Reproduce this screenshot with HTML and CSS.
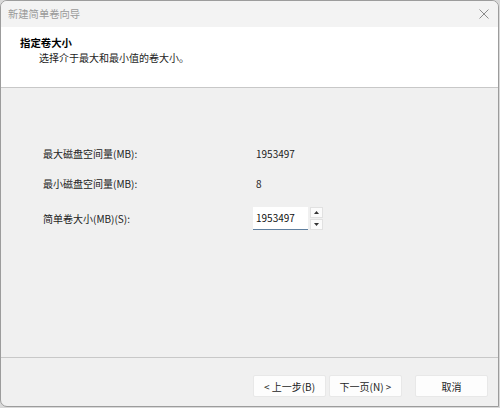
FILE: index.html
```html
<!DOCTYPE html>
<html lang="zh-CN">
<head>
<meta charset="utf-8">
<title>新建简单卷向导</title>
<link rel="stylesheet" href="styles.css">
</head>
<body>
<div class="window">
  <div class="titlebar">
    <span class="title">新建简单卷向导</span>
    <svg class="close" width="10" height="10" viewBox="0 0 10 10"><path d="M0.5 0.5 L9.5 9.5 M9.5 0.5 L0.5 9.5" stroke="#8c8c8c" stroke-width="1" fill="none"/></svg>
  </div>
  <div class="header">
    <div class="h-title">指定卷大小</div>
    <div class="h-sub">选择介于最大和最小值的卷大小。</div>
  </div>
  <div class="content">
    <div class="form">
      <div class="label">最大磁盘空间量(MB):</div>
      <div class="value">1953497</div>
      <div class="label">最小磁盘空间量(MB):</div>
      <div class="value">8</div>
      <div class="label">简单卷大小(MB)(S):</div>
      <div class="spin">
        <div class="spin-input">1953497</div>
        <div class="spin-btns">
          <div class="spin-btn"><svg width="5" height="3" viewBox="0 0 5 3"><path d="M0 3 L2.5 0 L5 3 Z" fill="#333"/></svg></div>
          <div class="spin-btn"><svg width="5" height="3" viewBox="0 0 5 3"><path d="M0 0 L2.5 3 L5 0 Z" fill="#333"/></svg></div>
        </div>
      </div>
    </div>
  </div>
  <div class="footer">
    <div class="btn">&lt; 上一步(B)</div>
    <div class="btn gap-small">下一页(N) &gt;</div>
    <div class="btn gap-large">取消</div>
  </div>
</div>
</body>
</html>
```

FILE: styles.css
```css
html, body {
  margin: 0;
  padding: 0;
  background: #d9d9d9;
}
body {
  width: 500px;
  height: 408px;
  overflow: hidden;
  font-family: "Microsoft YaHei", "Noto Sans CJK SC", "Noto Sans", sans-serif;
  font-size: 10px;
  color: #1c1c1c;
}
.window {
  box-sizing: border-box;
  width: 499px;
  height: 407px;
  border: 1px solid #9c9c9c;
  border-radius: 7px 7px 0 7px;
  background: #f0f0f0;
  display: flex;
  flex-direction: column;
  overflow: hidden;
}
.titlebar {
  height: 26px;
  flex: none;
  background: #f3f3f3;
  display: flex;
  align-items: center;
  justify-content: space-between;
  padding: 0 9px 0 7px;
}
.title {
  color: #9a9a9a;
  font-size: 10.3px;
  line-height: 14px;
}
.close {
  display: block;
}
.header {
  flex: none;
  height: 61px;
  box-sizing: border-box;
  background: #ffffff;
  border-bottom: 1px solid #c8c8c8;
  padding: 8px 0 0 19px;
}
.h-title {
  font-weight: bold;
  font-size: 10.4px;
  line-height: 15px;
  color: #000;
}
.h-sub {
  line-height: 15px;
  padding-left: 19px;
  color: #1c1c1c;
}
.content {
  flex: 1;
  border-bottom: 1px solid #c8c8c8;
  padding: 59px 0 0 42px;
}
.form {
  display: grid;
  grid-template-columns: 210px auto;
  row-gap: 16px;
  align-items: center;
}
.label {
  line-height: 14px;
  color: #222;
}
.value {
  line-height: 14px;
  padding-left: 3px;
  color: #222;
}
.spin {
  display: flex;
  gap: 2px;
  height: 23px;
}
.spin-input {
  width: 55px;
  box-sizing: border-box;
  background: #ffffff;
  border-bottom: 1px solid #5f7f9f;
  padding-left: 3px;
  line-height: 22px;
  font-size: 10px;
  color: #111;
}
.spin-btns {
  display: flex;
  flex-direction: column;
  gap: 1px;
  width: 13px;
}
.spin-btn {
  flex: 1;
  background: #fbfbfb;
  border: 1px solid #e1e1e1;
  display: flex;
  align-items: center;
  justify-content: center;
}
.spin-btn svg { display: block; }
.footer {
  flex: none;
  height: 48px;
  box-sizing: border-box;
  display: flex;
  justify-content: flex-end;
  align-items: flex-start;
  padding: 17px 10px 0 0;
}
.btn {
  box-sizing: border-box;
  width: 73px;
  height: 22px;
  background: #fdfdfd;
  border: 1px solid #e8e8e8;
  border-radius: 2px;
  display: flex;
  align-items: center;
  justify-content: center;
  color: #1c1c1c;
  font-size: 10px;
}
.gap-small { margin-left: 3px; }
.gap-large { margin-left: 13px; }
```
